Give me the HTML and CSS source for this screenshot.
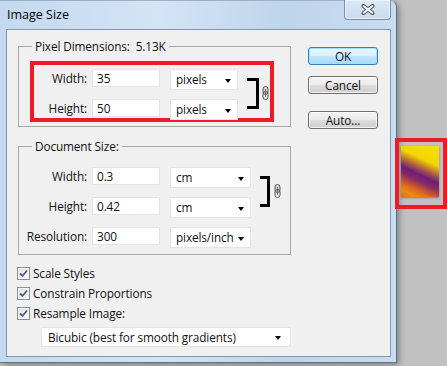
FILE: index.html
```html
<!DOCTYPE html>
<html>
<head>
<meta charset="utf-8">
<title>Image Size</title>
<link rel="stylesheet" href="styles.css">
</head>
<body>
<div class="window">
  <div class="titlebar">
    <span class="title">Image Size</span>
    <div class="close">
      <svg width="14" height="11" viewBox="0 0 14 11"><path d="M2.5 2 L11.5 9 M11.5 2 L2.5 9" stroke="#4a5566" stroke-width="4" stroke-linecap="round"/><path d="M2.5 2 L11.5 9 M11.5 2 L2.5 9" stroke="#ffffff" stroke-width="2" stroke-linecap="round"/></svg>
    </div>
  </div>
  <div class="client">
    <div class="left">
      <fieldset class="group pixel">
        <legend>Pixel Dimensions:&nbsp; 5.13K</legend>
        <div class="highlight">
          <div class="linked">
            <div class="rows">
              <div class="row"><span class="lbl">Width:</span><span class="field">35</span><span class="dropdown">pixels<i class="arrow"></i></span></div>
              <div class="row"><span class="lbl">Height:</span><span class="field">50</span><span class="dropdown">pixels<i class="arrow"></i></span></div>
            </div>
            <div class="bracket"></div>
            <svg class="chain" width="7" height="14" viewBox="0 0 7 14"><rect x="1" y="0.5" width="5" height="8" rx="2.5" fill="#d8d8d8" stroke="#555"/><rect x="1" y="5.5" width="5" height="8" rx="2.5" fill="none" stroke="#555"/><path d="M3.5 3 V11" stroke="#666"/></svg>
          </div>
        </div>
      </fieldset>
      <fieldset class="group doc">
        <legend>Document Size:</legend>
        <div class="linked">
          <div class="rows">
            <div class="row"><span class="lbl">Width:</span><span class="field">0.3</span><span class="dropdown">cm<i class="arrow"></i></span></div>
            <div class="row"><span class="lbl">Height:</span><span class="field">0.42</span><span class="dropdown">cm<i class="arrow"></i></span></div>
            <div class="row"><span class="lbl">Resolution:</span><span class="field">300</span><span class="dropdown">pixels/inch<i class="arrow"></i></span></div>
          </div>
          <div class="bracket"></div>
          <svg class="chain" width="7" height="14" viewBox="0 0 7 14"><rect x="1" y="0.5" width="5" height="8" rx="2.5" fill="#d8d8d8" stroke="#555"/><rect x="1" y="5.5" width="5" height="8" rx="2.5" fill="none" stroke="#555"/><path d="M3.5 3 V11" stroke="#666"/></svg>
        </div>
      </fieldset>
      <div class="checks">
        <div class="check"><span class="box"><svg width="11" height="11" viewBox="0 0 11 11"><path d="M2 5.5 L4.5 8 L9 2.5" fill="none" stroke="#4b5f86" stroke-width="1.8"/></svg></span>Scale Styles</div>
        <div class="check"><span class="box"><svg width="11" height="11" viewBox="0 0 11 11"><path d="M2 5.5 L4.5 8 L9 2.5" fill="none" stroke="#4b5f86" stroke-width="1.8"/></svg></span>Constrain Proportions</div>
        <div class="check"><span class="box"><svg width="11" height="11" viewBox="0 0 11 11"><path d="M2 5.5 L4.5 8 L9 2.5" fill="none" stroke="#4b5f86" stroke-width="1.8"/></svg></span>Resample Image:</div>
      </div>
      <div class="dropdown resample">Bicubic (best for smooth gradients)<i class="arrow"></i></div>
    </div>
    <div class="buttons">
      <div class="btn ok">OK</div>
      <div class="btn cancel">Cancel</div>
      <div class="btn auto">Auto...</div>
    </div>
  </div>
</div>
<div class="preview"><div class="thumb"></div></div>
</body>
</html>
```
FILE: styles.css
```css
html, body {
  margin: 0;
  padding: 0;
}
body {
  background: #c1c1c1;
  font-family: "Open Sans", "Noto Sans", sans-serif;
  font-size: 11.8px;
  letter-spacing: -0.12px;
  color: #111;
  width: 447px;
  height: 366px;
  overflow: hidden;
  position: relative;
}
.window {
  box-sizing: border-box;
  width: 397px;
  height: 363px;
  padding: 0 5px 5px 6px;
  background: linear-gradient(to right, #c4d9ef 0%, #d3e4f5 40%, #bfd5ec 72%, #c9dcf0 100%);
  border-top: 1px solid #9db0c6;
  border-right: 1px solid #5f7189;
  border-bottom: 1px solid #5f7189;
  border-top-right-radius: 7px;
  box-shadow: 2px 2px 6px rgba(0, 0, 0, 0.35);
  display: flex;
  flex-direction: column;
}
.titlebar {
  height: 28px;
  display: flex;
  justify-content: space-between;
  align-items: flex-start;
}
.title {
  font-size: 12.5px;
  letter-spacing: 0;
  line-height: 28px;
  padding-left: 1px;
  color: #000;
}
.close {
  box-sizing: border-box;
  width: 47px;
  height: 20px;
  margin-top: -1px;
  border: 1px solid #7d8fa6;
  border-top: none;
  border-radius: 0 0 4px 4px;
  background: linear-gradient(#dce8f5, #c9dbee);
  box-shadow: inset 0 0 0 1px rgba(255, 255, 255, 0.5);
  display: flex;
  justify-content: center;
  align-items: center;
}
.client {
  flex: 1;
  background: #f0f0f0;
  border: 1px solid #8597ad;
  display: flex;
  padding-left: 11px;
}
.left {
  width: 273px;
  padding-top: 9px;
}
.group {
  margin: 0;
  padding: 0;
  min-width: 0;
  border: 1px solid #a8a8a8;
}
.group legend {
  margin-left: 13px;
  padding: 0 3px;
  line-height: 14px;
  height: 14px;
}
.highlight {
  box-sizing: border-box;
  width: 244px;
  height: 61px;
  margin: 8px 0 4px 11px;
  border: 4px solid #ed1c24;
  padding-top: 4px;
}
.linked {
  display: flex;
  align-items: flex-start;
}
.rows {
  display: flex;
  flex-direction: column;
  gap: 9px;
}
.row {
  display: flex;
  align-items: flex-start;
  height: 21px;
}
.lbl {
  width: 53px;
  margin-right: 5px;
  text-align: right;
  line-height: 18px;
}
.field {
  box-sizing: border-box;
  width: 68px;
  height: 18px;
  background: #fff;
  border: 1px solid #e4e4e4;
  padding-left: 4px;
  line-height: 16px;
}
.dropdown {
  box-sizing: border-box;
  width: 68px;
  height: 21px;
  margin-left: 10px;
  background: #fff;
  border: 1px solid #e4e4e4;
  padding: 0 6px 0 5px;
  line-height: 19px;
  display: flex;
  justify-content: space-between;
  align-items: center;
}
.arrow {
  flex: none;
  width: 0;
  height: 0;
  margin-top: 2px;
  border-left: 3.5px solid transparent;
  border-right: 3.5px solid transparent;
  border-top: 4px solid #000;
}
.bracket {
  box-sizing: border-box;
  width: 12px;
  height: 31px;
  margin: 9px 0 0 9px;
  border: 3px solid #000;
  border-left: none;
}
.chain {
  margin: 17px 0 0 3px;
}
.doc {
  margin-top: 12px;
}
.doc .linked {
  padding: 14px 0 6px 4px;
}
.doc .lbl {
  width: 64px;
}
.doc .dropdown {
  width: 81px;
}
.doc .bracket {
  width: 10px;
}
.doc .chain {
  margin-left: 4px;
}
.checks {
  margin-top: 8px;
  margin-left: -1px;
}
.check {
  height: 20px;
  display: flex;
  align-items: center;
}
.box {
  box-sizing: border-box;
  width: 13px;
  height: 13px;
  margin-right: 3px;
  border: 1px solid #8e8f8f;
  background: linear-gradient(135deg, #dedede, #fbfbfb);
  box-shadow: inset 0 0 0 1px #f6f6f6;
  display: flex;
  align-items: center;
  justify-content: center;
}
.dropdown.resample {
  width: 250px;
  height: 20px;
  margin: 4px 0 0 23px;
  padding-left: 6px;
  padding-right: 9px;
}
.buttons {
  margin-left: 17px;
  padding-top: 17px;
  display: flex;
  flex-direction: column;
}
.btn {
  box-sizing: border-box;
  width: 70px;
  height: 18px;
  border: 1px solid #707070;
  border-radius: 3px;
  background: linear-gradient(#f3f3f3 0%, #ebebeb 50%, #dddddd 51%, #cfcfcf 100%);
  box-shadow: inset 0 0 0 1px rgba(255, 255, 255, 0.7);
  text-align: center;
  line-height: 16px;
}
.ok {
  border-color: #3c7fb1;
  background: linear-gradient(#eaf6fd 0%, #d9f0fc 50%, #bee6fd 51%, #a7d9f5 100%);
  box-shadow: inset 0 0 0 1px #9ee0ff;
}
.cancel {
  margin-top: 11px;
}
.auto {
  margin-top: 17px;
}
.preview {
  position: absolute;
  left: 395px;
  top: 138px;
  box-sizing: border-box;
  width: 52px;
  height: 71px;
  border: 4px solid #ed1c24;
  padding: 4px 0 0 2px;
}
.thumb {
  width: 38px;
  height: 51px;
  background: linear-gradient(205deg, #f8e000 0%, #f2d600 30%, #b06040 44%, #6c1d7c 55%, #8a2a60 65%, #e06a18 80%, #f08a10 90%, #d07010 100%);
  box-shadow: 0 1px 2px rgba(0, 0, 0, 0.35);
}
```
